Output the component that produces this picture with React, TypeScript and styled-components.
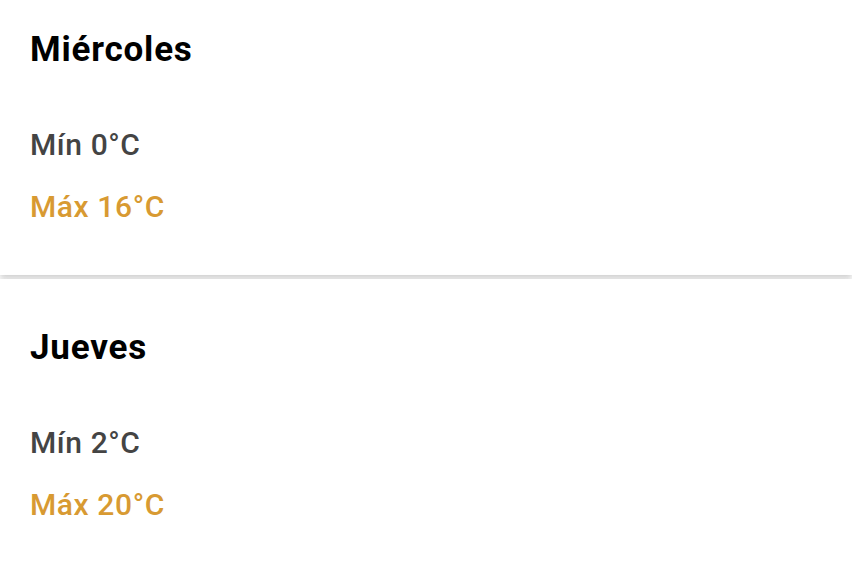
import React from "react";
import styled, { createGlobalStyle } from "styled-components";

const GlobalStyle = createGlobalStyle`
  html, body {
    margin: 0;
    padding: 0;
    background: #fff;
    font-family: Roboto, "Noto Sans", Arial, sans-serif;
  }
`;

// the view is scrolled a little, so the first card starts above the top edge
const ForecastList = styled.ul`
  list-style: none;
  margin: -19px 0 0;
  padding: 0;
  display: flex;
  flex-direction: column;
  gap: 4px;
`;

const DayCard = styled.li`
  background: #fff;
  box-shadow: 0 2px 6px rgba(0, 0, 0, 0.22);
  height: 294px;
  padding: 47px 30px 0;
  box-sizing: border-box;
  display: flex;
  flex-direction: column;
`;

const DayName = styled.h2`
  margin: 0 0 55px;
  font-size: 35px;
  font-weight: 700;
  line-height: 44px;
  color: #000;
  letter-spacing: 0.8px;
`;

const Temp = styled.div<{ $max?: boolean }>`
  font-size: 30px;
  font-weight: 500;
  line-height: 36px;
  margin-bottom: 26px;
  letter-spacing: 0.6px;
  color: ${(p) => (p.$max ? "#d89a32" : "#444")};
`;

const days = [
  { name: "Miércoles", min: 0, max: 16 },
  { name: "Jueves", min: 2, max: 20 },
];

export default function App() {
  return (
    <>
      <GlobalStyle />
      <ForecastList>
        {days.map((d) => (
          <DayCard key={d.name}>
            <DayName>{d.name}</DayName>
            <Temp>Mín {d.min}°C</Temp>
            <Temp $max>Máx {d.max}°C</Temp>
          </DayCard>
        ))}
      </ForecastList>
    </>
  );
}
